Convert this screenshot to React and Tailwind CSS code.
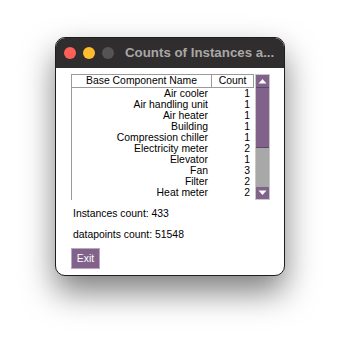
const rows = [
  ['Air cooler', 1],
  ['Air handling unit', 1],
  ['Air heater', 1],
  ['Building', 1],
  ['Compression chiller', 1],
  ['Electricity meter', 2],
  ['Elevator', 1],
  ['Fan', 3],
  ['Filter', 2],
  ['Heat meter', 2],
];

function App() {
  return (
    <div className="w-[341px] h-[351px] bg-white pt-[37px] pl-[55px] font-['Liberation_Sans',Arial,sans-serif]">
      <div className="w-[230px] h-[239px] rounded-[10px] bg-white border border-[#1e1e1e] shadow-[0_16px_32px_rgba(0,0,0,0.5)] overflow-hidden flex flex-col">
        <div className="h-[30px] shrink-0 bg-[#2f2d2d] flex items-center pl-[8px]">
          <span className="w-[12px] h-[12px] rounded-full bg-[#fe5f57]" />
          <span className="w-[12px] h-[12px] rounded-full bg-[#febc2e] ml-[7px]" />
          <span className="w-[12px] h-[12px] rounded-full bg-[#555353] ml-[7px]" />
          <span className="ml-[11px] text-[13.3px] font-bold text-[#a9a7a7] whitespace-nowrap">Counts of Instances a...</span>
        </div>
        <div className="flex-1 pl-[15px] pt-[6px] text-[10.4px] text-black">
          <div className="flex gap-[1px]">
            <div className="w-[183px] h-[126px] border-l border-[#9a9a9a]">
              <div className="flex h-[14px] border-t border-b border-[#9a9a9a] leading-[12px]">
                <div className="w-[140px] text-center border-r border-[#9a9a9a]">Base Component Name</div>
                <div className="flex-1 text-center border-r border-[#9a9a9a]">Count</div>
              </div>
              {rows.map(([name, count]) => (
                <div key={name} className="flex h-[11px] leading-[11px]">
                  <div className="w-[140px] text-right pr-[4px]">{name}</div>
                  <div className="flex-1 text-right pr-[4px]">{count}</div>
                </div>
              ))}
            </div>
            <div className="w-[15px] h-[126px] flex flex-col border border-[#c8c8c8]">
              <div className="h-[13px] bg-[#80628b] border-b border-[#5a4763] flex items-center justify-center">
                <svg width="9" height="6" viewBox="0 0 9 6"><path d="M0.5 5.5 L4.5 1 L8.5 5.5 Z" fill="#fff" /></svg>
              </div>
              <div className="h-[60px] bg-[#80628b] border-b border-[#5a4763]" />
              <div className="flex-1 bg-[#a8a8a8]" />
              <div className="h-[12px] bg-[#80628b] flex items-center justify-center">
                <svg width="9" height="6" viewBox="0 0 9 6"><path d="M0.5 0.5 L4.5 5 L8.5 0.5 Z" fill="#fff" /></svg>
              </div>
            </div>
          </div>
          <div className="mt-[8px] pl-[2px] h-[12px] leading-[12px]">Instances count: 433</div>
          <div className="mt-[9px] pl-[2px] h-[12px] leading-[12px]">datapoints count: 51548</div>
          <button className="mt-[7px] w-[29px] h-[21px] bg-[#80628b] border border-[#b9a9bf] text-white text-[10.4px] leading-[19px]">Exit</button>
        </div>
      </div>
    </div>
  );
}

export default App;
